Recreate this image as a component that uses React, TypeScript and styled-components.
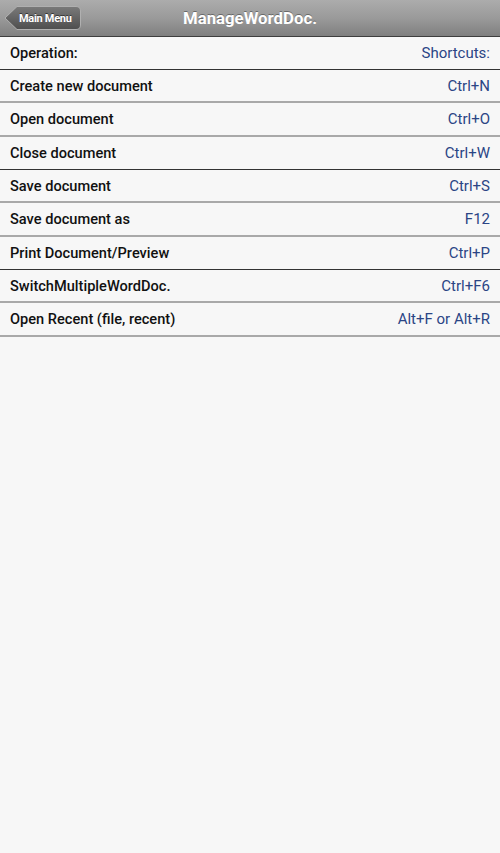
import React from 'react'
import styled, { createGlobalStyle } from 'styled-components'

const GlobalStyle = createGlobalStyle`
	html, body {
		margin: 0;
		padding: 0;
		background: #f7f7f7;
		font-family: Roboto, 'Liberation Sans', sans-serif;
	}
`

const rows = [
	{ op: 'Create new document', key: 'Ctrl+N', h: 31, dark: false },
	{ op: 'Open document', key: 'Ctrl+O', h: 32, dark: false },
	{ op: 'Close document', key: 'Ctrl+W', h: 32, dark: true },
	{ op: 'Save document', key: 'Ctrl+S', h: 31, dark: false },
	{ op: 'Save document as', key: 'F12', h: 32, dark: false },
	{ op: 'Print Document/Preview', key: 'Ctrl+P', h: 32, dark: true },
	{ op: 'SwitchMultipleWordDoc.', key: 'Ctrl+F6', h: 31, dark: false },
	{ op: 'Open Recent (file, recent)', key: 'Alt+F or Alt+R', h: 32, dark: false },
]

const App = () => {
	return (
		<Page>
			<GlobalStyle />
			<TopBar>
				<BackButton>
					<svg className="shape" width="78" height="26" viewBox="0 0 78 26">
						<defs>
							<linearGradient id="bb" x1="0" y1="0" x2="0" y2="1">
								<stop offset="0" stopColor="#7a7a7a" />
								<stop offset="1" stopColor="#4e4e4e" />
							</linearGradient>
						</defs>
						<path
							d="M1 13 L13 1.5 H72 Q76.5 1.5 76.5 6 V20 Q76.5 24.5 72 24.5 H13 Z"
							fill="url(#bb)"
							stroke="#b0b0b0"
							strokeWidth="1"
						/>
					</svg>
					<span>Main Menu</span>
				</BackButton>
				<Title>ManageWordDoc.</Title>
			</TopBar>

			<List>
				<Row $h={32} $dark>
					<Operation>Operation:</Operation>
					<Shortcut>Shortcuts:</Shortcut>
				</Row>
				{rows.map((r) => (
					<Row key={r.op} $h={r.h} $dark={r.dark}>
						<Operation>{r.op}</Operation>
						<Shortcut>{r.key}</Shortcut>
					</Row>
				))}
			</List>
		</Page>
	)
}

export default App

const Page = styled.div`
	min-height: 853px;
	background: #f7f7f7;
	display: flex;
	flex-direction: column;
`

const TopBar = styled.header`
	position: relative;
	height: 36px;
	display: flex;
	align-items: center;
	justify-content: center;
	background: linear-gradient(to bottom, #acacac 0%, #9a9a9a 50%, #7f7f7f 100%);
	border-bottom: 1px solid #3e3e3e;
`

const BackButton = styled.button`
	position: absolute;
	left: 4px;
	top: 5px;
	width: 78px;
	height: 26px;
	padding: 0 0 0 15px;
	border: none;
	background: transparent;
	display: flex;
	align-items: center;
	cursor: pointer;

	.shape {
		position: absolute;
		left: 0;
		top: 0;
	}

	span {
		position: relative;
		color: #ffffff;
		font-family: Roboto, 'Liberation Sans', sans-serif;
		font-weight: 700;
		font-size: 11px;
		letter-spacing: -0.3px;
		text-shadow: 0 -1px 0 rgba(0, 0, 0, 0.5);
	}
`

const Title = styled.h1`
	margin: 0;
	color: #ffffff;
	font-size: 16.8px;
	font-weight: 700;
	text-shadow: 0 -1px 0 rgba(0, 0, 0, 0.35);
`

const List = styled.div`
	display: flex;
	flex-direction: column;
`

const Row = styled.div<{ $h: number; $dark?: boolean }>`
	height: ${(p) => p.$h}px;
	display: flex;
	align-items: center;
	justify-content: space-between;
	padding: 0 10px;
	border-bottom: ${(p) => (p.$dark ? '1px solid #333333' : '2px solid #a9a9a9')};
	box-sizing: content-box;
`

const Operation = styled.span`
	color: #111111;
	font-size: 14.6px;
	font-weight: 500;
`

const Shortcut = styled.span`
	color: #2b4585;
	font-size: 15px;
	font-weight: 400;
`
